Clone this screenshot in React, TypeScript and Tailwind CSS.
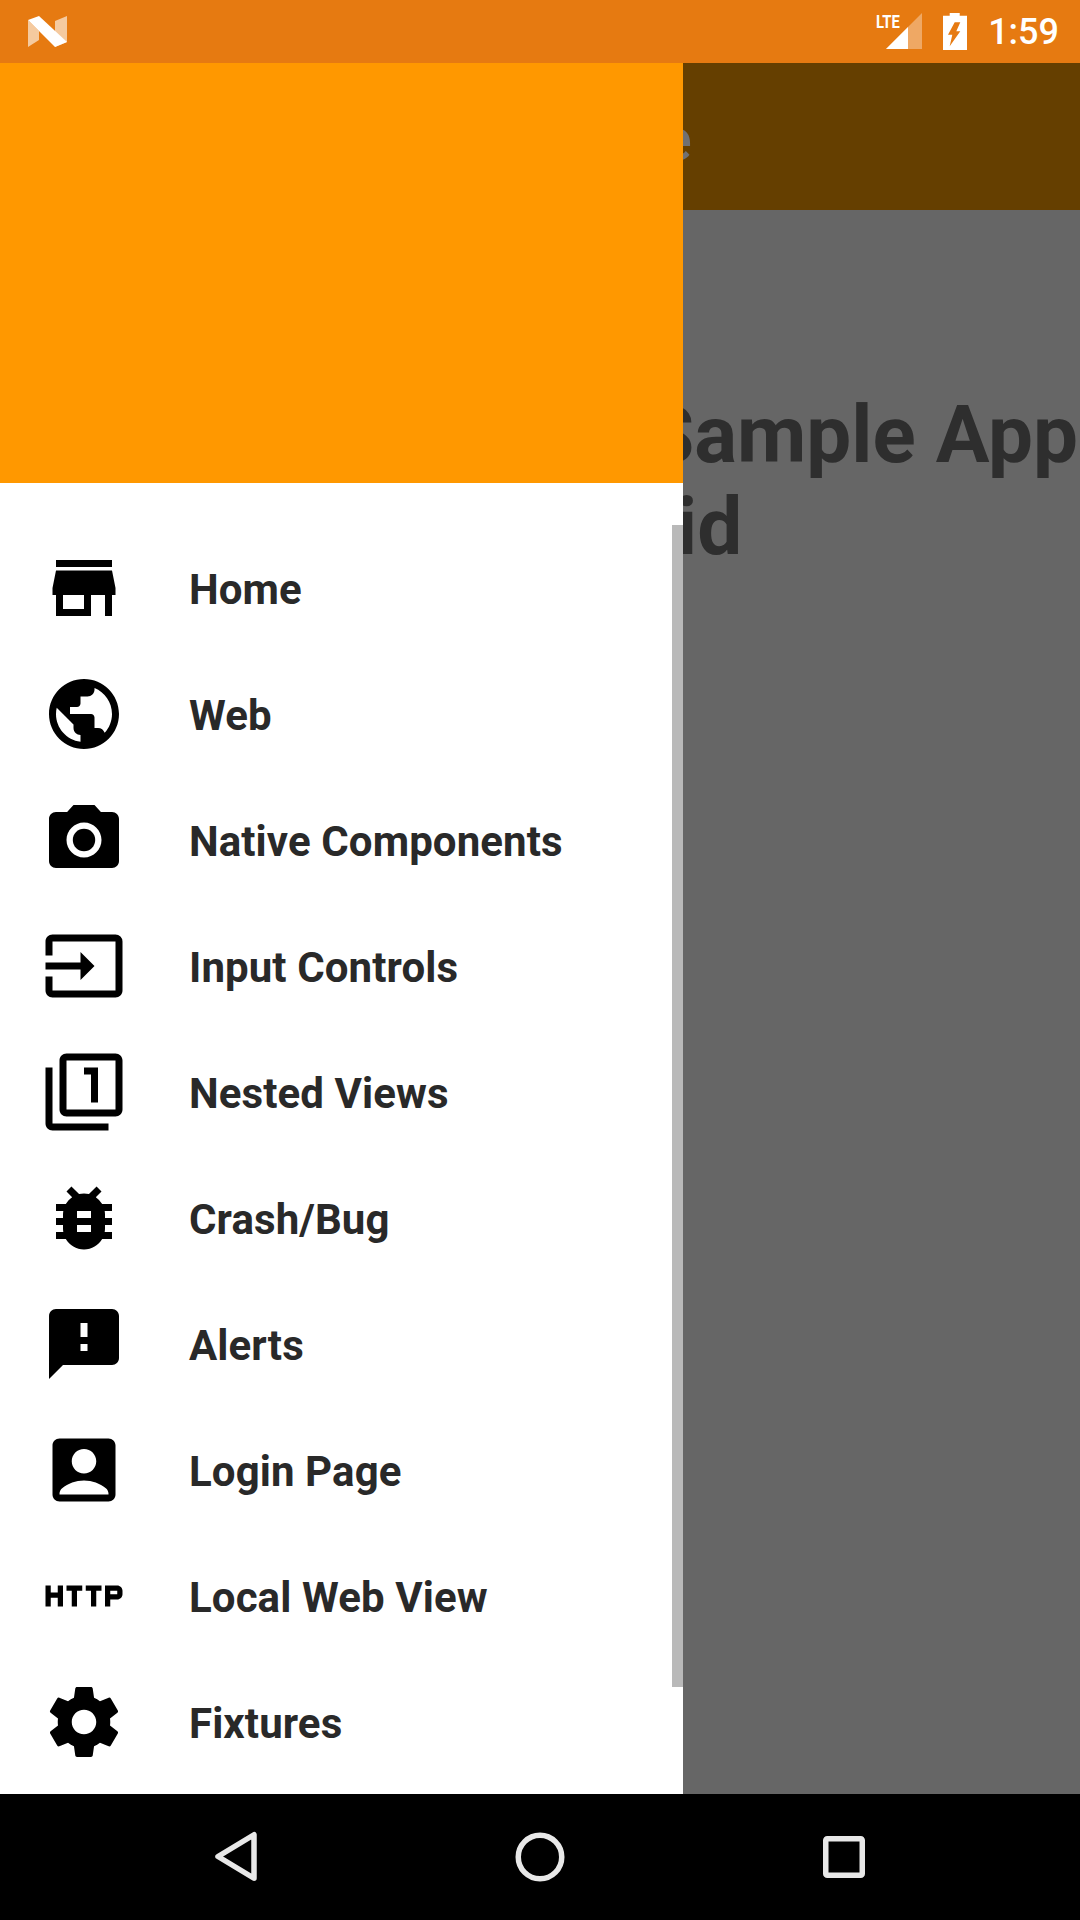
import {
  MdStore,
  MdPublic,
  MdPhotoCamera,
  MdInput,
  MdFilter1,
  MdBugReport,
  MdSmsFailed,
  MdAccountBox,
  MdHttp,
} from "react-icons/md";

// react-icons ships the narrower gear, the app uses the older one
const GearIcon = ({ size, className }: { size: number; className?: string }) => (
  <svg width={size} height={size} viewBox="0 0 24 24" fill="currentColor" className={className}>
    <path d="M19.43 12.98c.04-.32.07-.64.07-.98s-.03-.66-.07-.98l2.11-1.65c.19-.15.24-.42.12-.64l-2-3.46c-.12-.22-.39-.3-.61-.22l-2.49 1c-.52-.4-1.08-.73-1.69-.98l-.38-2.65C14.46 2.18 14.25 2 14 2h-4c-.25 0-.46.18-.49.42l-.38 2.65c-.61.25-1.17.59-1.69.98l-2.49-1c-.23-.09-.49 0-.61.22l-2 3.46c-.13.22-.07.49.12.64l2.11 1.65c-.04.32-.07.65-.07.98s.03.66.07.98l-2.11 1.65c-.19.15-.24.42-.12.64l2 3.46c.12.22.39.3.61.22l2.49-1c.52.4 1.08.73 1.69.98l.38 2.65c.03.24.24.42.49.42h4c.25 0 .46-.18.49-.42l.38-2.65c.61-.25 1.17-.59 1.69-.98l2.49 1c.23.09.49 0 .61-.22l2-3.46c.12-.22.07-.49-.12-.64l-2.11-1.65zM12 15.5c-1.93 0-3.5-1.57-3.5-3.5s1.57-3.5 3.5-3.5 3.5 1.57 3.5 3.5-1.57 3.5-3.5 3.5z" />
  </svg>
);

const navItems = [
  { label: "Home", icon: MdStore },
  { label: "Web", icon: MdPublic },
  { label: "Native Components", icon: MdPhotoCamera },
  { label: "Input Controls", icon: MdInput },
  { label: "Nested Views", icon: MdFilter1 },
  { label: "Crash/Bug", icon: MdBugReport },
  { label: "Alerts", icon: MdSmsFailed },
  { label: "Login Page", icon: MdAccountBox },
  { label: "Local Web View", icon: MdHttp },
  { label: "Fixtures", icon: GearIcon },
];

const StatusBar = () => (
  <div className="flex h-[63px] shrink-0 items-center justify-between bg-[#e67a11] pl-[28px] pr-[21px]">
    {/* Nougat logo */}
    <svg width="40" height="32" viewBox="0 0 40 32">
      <path d="M0 4v27l11-7V15z" fill="#fff" fillOpacity="0.6" />
      <path d="M39 0v26l-12 5V5z" fill="#fff" fillOpacity="0.6" />
      <path d="M0 4L11 0l28 26-12 5z" fill="#fff" />
    </svg>
    <div className="flex items-center">
      <div className="relative h-[37px] w-[45px]">
        <span className="absolute left-[-1px] top-[-1px] origin-left font-['Roboto',sans-serif] text-[19px] font-bold leading-[19px] text-white [transform:scaleX(0.78)]">
          LTE
        </span>
        <svg className="absolute left-[9px] top-0" width="36" height="36" viewBox="0 0 36 36">
          <path d="M36 0v36H0z" fill="#fff" fillOpacity="0.35" />
          <path d="M22 14v22H0z" fill="#fff" />
        </svg>
      </div>
      <svg className="ml-[21px]" width="24" height="37" viewBox="0 0 24 37">
        <path
          fillRule="evenodd"
          d="M6.7 0h10v2.7H24V37H0V2.700h6.700zM11.700 9.300L5 21.700h4.300L6.700 33.300 17.300 18.300h-4l4-9z"
          fill="#fff"
        />
      </svg>
      <span className="ml-[21px] font-['Roboto',sans-serif] text-[36px] font-medium leading-none text-white">
        1:59
      </span>
    </div>
  </div>
);

const NavBar = () => (
  <div className="flex h-[126px] shrink-0 items-center gap-[257px] bg-black pl-[212px]">
    <svg width="46" height="52" viewBox="0 0 46 52" fill="none" stroke="#e8e8e8" strokeWidth="5.5" strokeLinejoin="round">
      <path d="M42 3.750V47.250L6 25.500z" />
    </svg>
    <svg width="50" height="50" viewBox="0 0 50 50" fill="none" stroke="#e8e8e8" strokeWidth="5.5">
      <circle cx="25" cy="25" r="21.750" />
    </svg>
    <svg width="44" height="44" viewBox="0 0 44 44" fill="none" stroke="#e8e8e8" strokeWidth="5.5" strokeLinejoin="round">
      <rect x="3.750" y="3.750" width="36.500" height="36.500" rx="1.500" />
    </svg>
  </div>
);

const App = () => {
  return (
    <div className="relative flex h-[1920px] w-[1080px] flex-col overflow-hidden bg-[#666666] font-['Roboto',sans-serif]">
      <StatusBar />

      {/* Screen under the drawer, already dimmed by the scrim */}
      <div className="flex flex-1 flex-col">
        <div className="flex h-[147px] shrink-0 items-center justify-end bg-[#653f00] pr-[388px] pt-[6px]">
          <span className="text-[60px] font-medium leading-none text-[#707072]">Home</span>
        </div>
        <div className="flex-1 pl-[645px] pt-[179px]">
          <p className="whitespace-nowrap text-[80px] font-bold leading-[92px] text-[#2e2e2e]">
            Sample App
            <br />
            <span className="ml-[31px]">id</span>
          </p>
        </div>
      </div>

      <NavBar />

      {/* Drawer */}
      <aside className="absolute bottom-[126px] left-0 top-[63px] flex w-[683px] flex-col bg-white">
        <div className="h-[420px] shrink-0 bg-[#ff9800]" />
        <nav className="pt-[42px]">
          {navItems.map((item) => (
            <div key={item.label} className="flex h-[126px] items-center gap-[63px] pl-[42px]">
              <item.icon size={84} className="shrink-0 text-black" />
              <span className="pt-[4px] text-[42px] font-bold leading-none tracking-[0.1px] text-[#292929]">
                {item.label}
              </span>
            </div>
          ))}
        </nav>
        <div className="absolute right-0 top-[462px] h-[1162px] w-[11px] bg-[#b9b9b9]" />
      </aside>
    </div>
  );
};

export default App;
